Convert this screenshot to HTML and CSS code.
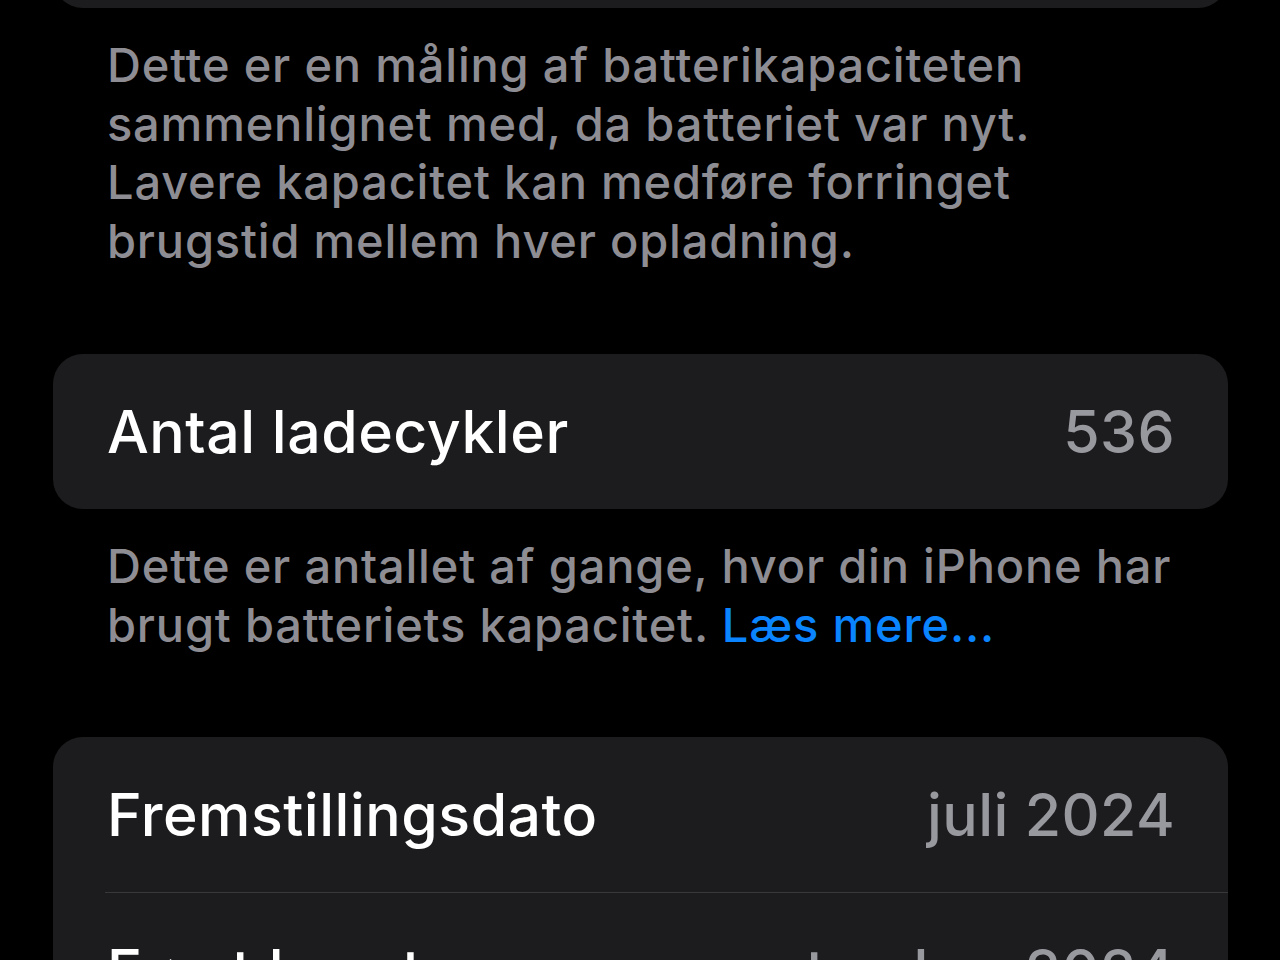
FILE: index.html
```html
<!DOCTYPE html>
<html lang="da">
<head>
<meta charset="utf-8">
<title>Batteritilstand</title>
<link rel="stylesheet" href="styles.css">
</head>
<body>
<main class="page">
  <section class="card card-top"></section>
  <p class="footer">Dette er en måling af batterikapaciteten sammenlignet med, da batteriet var nyt. Lavere kapacitet kan medføre forringet brugstid mellem hver opladning.</p>

  <section class="card">
    <div class="row">
      <span class="label">Antal ladecykler</span>
      <span class="value">536</span>
    </div>
  </section>
  <p class="footer">Dette er antallet af gange, hvor din iPhone har brugt batteriets kapacitet. <a class="link" href="#">Læs mere...</a></p>

  <section class="card">
    <div class="row">
      <span class="label">Fremstillingsdato</span>
      <span class="value">juli 2024</span>
    </div>
    <div class="row">
      <span class="label">Først brugt</span>
      <span class="value">september 2024</span>
    </div>
  </section>
</main>
</body>
</html>
```

FILE: styles.css
```css
html, body {
  margin: 0;
  padding: 0;
  background: #000;
  height: 960px;
  overflow: hidden;
}

.page {
  display: flex;
  flex-direction: column;
  padding: 0 52px 0 53px;
  font-family: Inter, "Noto Sans", "Liberation Sans", sans-serif;
  -webkit-font-smoothing: antialiased;
}

.card {
  background: #1c1c1e;
  border-radius: 30px;
  overflow: hidden;
  flex: none;
}

.card-top {
  height: 60px;
  margin-top: -52px;
}

.footer {
  margin: 28px 0 83px;
  padding: 0 54px;
  color: #8d8d93;
  font-size: 47px;
  font-weight: 500;
  line-height: 58.7px;
  letter-spacing: 0.8px;
}

.link {
  color: #0a84ff;
  text-decoration: none;
}

.row {
  display: flex;
  justify-content: space-between;
  align-items: center;
  height: 155px;
  box-sizing: border-box;
  padding: 0 53px 0 54px;
}

.row + .row {
  border-top: 1.5px solid #38383a;
  margin-left: 52px;
  padding-left: 2px;
}

.label {
  color: #fff;
  font-size: 59px;
  font-weight: 500;
  letter-spacing: 0.5px;
}

.value {
  color: #98989f;
  font-size: 59px;
  font-weight: 500;
  letter-spacing: 0.4px;
}
```
